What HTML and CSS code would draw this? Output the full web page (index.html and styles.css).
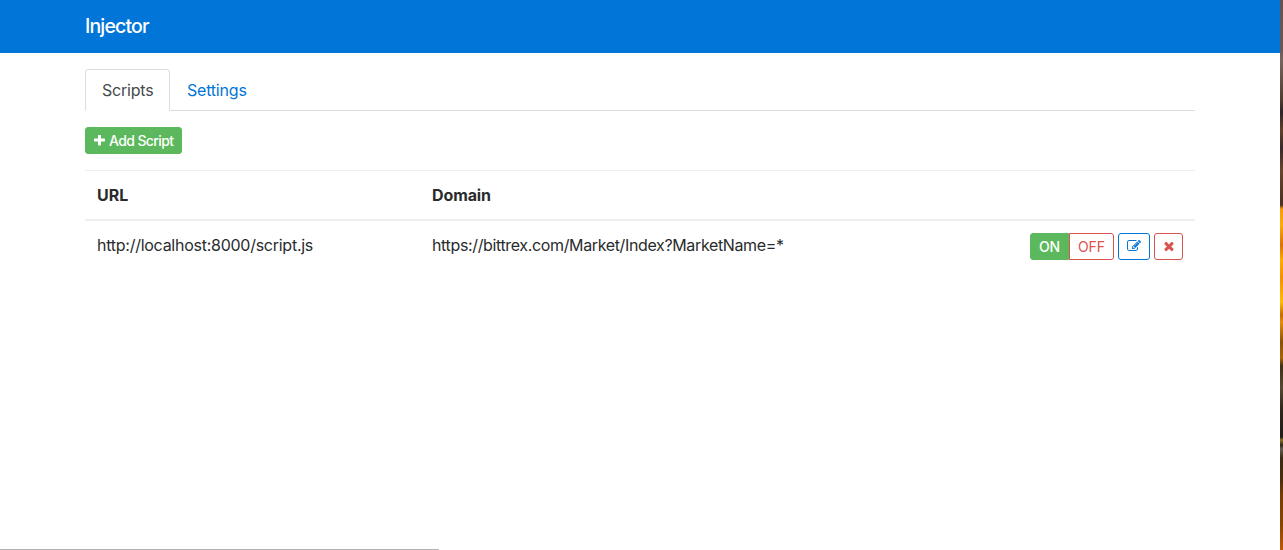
FILE: index.html
```html
<!DOCTYPE html>
<html lang="en">
<head>
<meta charset="utf-8">
<title>Injector</title>
<link rel="stylesheet" href="styles.css">
</head>
<body>
<div class="screen">
  <div class="app">
    <header class="navbar"><span class="brand">Injector</span></header>
    <main class="container">
      <nav class="tabs">
        <a class="tab tab-active">Scripts</a>
        <a class="tab tab-settings">Settings</a>
      </nav>
      <button class="btn btn-add"><svg class="plus" viewBox="192 192 1408 1408"><path d="M1600 736v192q0 40-28 68t-68 28h-416v416q0 40-28 68t-68 28h-192q-40 0-68-28t-28-68v-416h-416q-40 0-68-28t-28-68v-192q0-40 28-68t68-28h416v-416q0-40 28-68t68-28h192q40 0 68 28t28 68v416h416q40 0 68 28t28 68z"/></svg><span class="add-label">Add Script</span></button>
      <section class="table">
        <div class="row head"><span class="th-url">URL</span><span class="th-domain">Domain</span></div>
        <div class="row body">
          <span class="url">http://localhost:8000/script.js</span>
          <span class="domain">https://bittrex.com/Market/Index?MarketName=*</span>
          <div class="actions">
            <div class="group"><button class="btn btn-on">ON</button><button class="btn btn-off">OFF</button></div>
            <button class="btn btn-edit" aria-label="Edit"><svg class="icon" viewBox="0 0 1792 1792"><path d="M888 1184l116-116-152-152-116 116v56h96v96h56zm440-720q-16-16-33 1l-350 350q-17 17-1 33t33-1l350-350q17-17 1-33zm80 594v190q0 119-84.500 203.500t-203.500 84.500h-832q-119 0-203.500-84.500t-84.500-203.500v-832q0-119 84.500-203.500t203.500-84.500h832q63 0 117 25 15 7 18 23 3 17-9 29l-49 49q-14 14-32 8-23-6-45-6h-832q-66 0-113 47t-47 113v832q0 66 47 113t113 47h832q66 0 113-47t47-113v-126q0-13 9-22l64-64q15-15 35-7t20 29zm-96-738l288 288-672 672h-288v-288zm444 132l-92 92-288-288 92-92q28-28 68-28t68 28l152 152q28 28 28 68t-28 68z"/></svg></button>
            <button class="btn btn-delete" aria-label="Delete"><svg class="icon" viewBox="0 0 1792 1792"><path d="M1490 1322q0 40-28 68l-136 136q-28 28-68 28t-68-28l-294-294-294 294q-28 28-68 28t-68-28l-136-136q-28-28-28-68t28-68l294-294-294-294q-28-28-28-68t28-68l136-136q28-28 68-28t68 28l294 294 294-294q28-28 68-28t68 28l136 136q28 28 28 68t-28 68l-294 294 294 294q28 28 28 68z"/></svg></button>
          </div>
        </div>
      </section>
    </main>
    <div class="status-edge"></div>
  </div>
  <div class="desktop-edge"></div>
</div>
</body>
</html>
```
FILE: styles.css
```css
* { box-sizing: border-box; }
body { margin: 0; background: #fff; color: #292b2c; font: 16px/24px Inter, "Liberation Sans", sans-serif; }
.screen { display: flex; height: 550px; overflow: hidden; }
.app { width: 1280px; display: flex; flex-direction: column; }
.desktop-edge {
  width: 3px;
  background: linear-gradient(#66534f 0, #6b5855 50px, #79645f 60px, #4f3d30 100px, #2f2428 112px, #60402a 130px, #3a292b 148px, #68452e 170px, #4b3020 205px, #f79a08 209px, #fdac08 225px, #db7104 245px, #ffac00 260px, #f59000 278px, #ffbc08 302px, #c56b00 315px, #e58c08 322px, #8b5205 342px, #a86505 358px, #413016 366px, #564832 388px, #2e261b 410px, #211d17 437px, #8d7128 440px, #302617 445px, #645c50 449px, #3c2b14 458px, #4b2c0b 480px, #773d05 495px, #884500 525px, #c05807 550px);
}
.navbar { height: 53px; padding: 11px 85px; background: #0275d8; }
.brand { display: block; color: #fff; font-size: 19.5px; font-weight: 500; line-height: 30px; letter-spacing: -0.85px; }
.container { width: 1110px; margin: 16px 0 0 85px; }
.tabs { display: flex; height: 42px; border-bottom: 1px solid #ddd; }
.tab { height: 42px; padding: 8px 16px; border: 1px solid transparent; color: #0275d8; letter-spacing: -0.2px; white-space: nowrap; }
.tab-active { width: 85px; border-color: #ddd #ddd #fff; border-radius: 4px 4px 0 0; background: #fff; color: #464a4c; }
.btn { display: flex; align-items: center; justify-content: center; height: 27px; margin: 0; padding: 0; border: 1px solid; border-radius: 3px; background: #fff; font: 14px/21px Inter, "Liberation Sans", sans-serif; white-space: nowrap; }
.btn-add { width: 97px; margin-top: 16px; padding: 0 0 1px 8px; justify-content: flex-start; gap: 4px; border-color: #5cb85c; background: #5cb85c; color: #fff; font-weight: 500; }
.add-label { letter-spacing: -0.62px; }
.plus { width: 11px; height: 11px; fill: currentColor; flex: none; }
.icon { width: 14px; height: 14px; margin-bottom: 2px; fill: currentColor; flex: none; }
.table { margin-top: 16px; }
.row { display: grid; grid-template-columns: 335px 500px 1fr; padding: 12px 0; border-top: 1px solid #eceeef; }
.row > span { padding-left: 12px; white-space: nowrap; }
.head { height: 51px; border-bottom: 2px solid #eceeef; font-weight: 700; }
.head > span { line-height: 25px; }
.th-domain { letter-spacing: -0.1px; }
.body { border-top: 0; }
.url { letter-spacing: -0.26px; }
.domain { letter-spacing: -0.36px; }
.actions { display: flex; justify-content: flex-end; gap: 4px; padding-right: 12px; }
.group { display: flex; }
.btn-on { width: 39px; border-color: #5cb85c; border-radius: 3px 0 0 3px; background: #5cb85c; color: #fff; font-weight: 500; letter-spacing: -0.2px; }
.btn-off { width: 45px; border-color: #d9534f; border-radius: 0 3px 3px 0; color: #d9534f; }
.btn-edit { width: 32px; border-color: #0275d8; color: #0275d8; }
.btn-delete { width: 29px; border-color: #d9534f; color: #d9534f; }
.status-edge { width: 439px; height: 1px; margin-top: auto; background: #b2b2b2; border-top-right-radius: 1px; }
```
